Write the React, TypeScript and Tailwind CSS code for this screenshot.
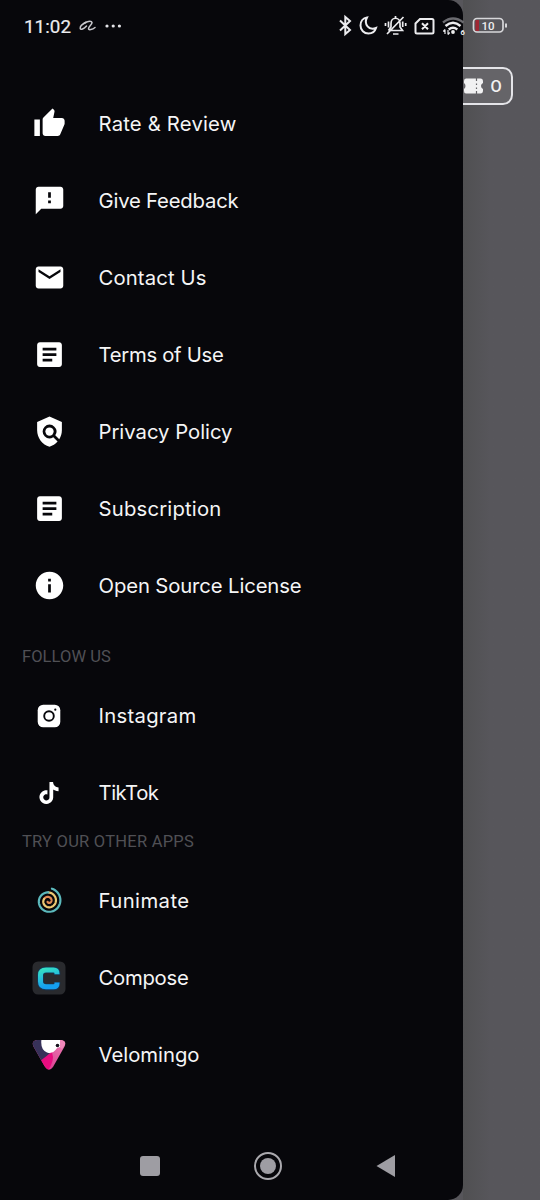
import { useState, useRef, useLayoutEffect } from "react";
import type { ReactNode } from "react";

function M({ d, s = 33 }: { d: string; s?: number }) {
  return (
    <svg width={s} height={s} viewBox="0 0 24 24" fill="#fff" fillRule="evenodd">
      <path d={d} />
    </svg>
  );
}

const thumb = "M1 21h4V9H1v12zm22-11c0-1.100-.9-2-2-2h-6.310l.95-4.570.03-.32c0-.41-.17-.79-.44-1.060L14.170 1 7.590 7.590C7.220 7.950 7 8.450 7 9v10c0 1.100.9 2 2 2h9c.83 0 1.540-.5 1.840-1.220l3.020-7.050c.09-.23.14-.47.14-.73v-2z";
const feedback = "M20 2H4c-1.100 0-1.990.9-1.990 2L2 22l4-4h14c1.100 0 2-.9 2-2V4c0-1.100-.9-2-2-2zm-7 12h-2v-2h2v2zm0-4h-2V6h2v4z";
const mail = "M20 4H4c-1.100 0-2 .9-2 2v12c0 1.100.9 2 2 2h16c1.100 0 2-.9 2-2V6c0-1.100-.9-2-2-2zm0 4-8 5-8-5V6l8 5 8-5v2z";
const article = "M19 3H5c-1.100 0-2 .9-2 2v14c0 1.100.9 2 2 2h14c1.100 0 2-.9 2-2V5c0-1.100-.9-2-2-2zm-5 14H7v-2h7v2zm3-4H7v-2h10v2zm0-4H7V7h10v2z";
const info = "M12 2C6.480 2 2 6.480 2 12s4.480 10 10 10 10-4.480 10-10S17.520 2 12 2zm1 15h-2v-6h2v6zm0-8h-2V7h2v2z";
const tiktok = "M12.525.02c1.310-.02 2.610-.01 3.910-.02.080 1.530.630 3.090 1.750 4.170 1.120 1.110 2.700 1.620 4.240 1.790v4.030c-1.440-.05-2.890-.35-4.200-.97-.57-.26-1.100-.59-1.620-.93-.01 2.920.01 5.840-.02 8.750-.08 1.400-.54 2.790-1.350 3.940-1.310 1.920-3.580 3.170-5.910 3.210-1.430.08-2.860-.31-4.080-1.030-2.020-1.190-3.440-3.370-3.650-5.710-.02-.5-.03-1-.01-1.490.18-1.900 1.120-3.720 2.580-4.960 1.660-1.440 3.980-2.130 6.150-1.720.02 1.480-.04 2.960-.04 4.440-.99-.32-2.150-.23-3.020.37-.63.41-1.110 1.040-1.360 1.750-.21.51-.15 1.070-.14 1.610.24 1.640 1.820 3.020 3.500 2.870 1.120-.01 2.190-.66 2.770-1.610.19-.33.4-.67.410-1.060.1-1.790.06-3.570.07-5.360.01-4.030-.01-8.050.02-12.070z";

function Shield() {
  return (
    <svg width="33" height="33" viewBox="0 0 24 24">
      <path fill="#fff" d="M12 1 3 5v6c0 5.550 3.840 10.740 9 12 2.300-.56 4.330-1.900 5.880-3.710l-3.120-3.120a4.994 4.994 0 0 1-6.290-.64 5.003 5.003 0 0 1 0-7.070 5.003 5.003 0 0 1 7.070 0 5.006 5.006 0 0 1 .64 6.290l2.900 2.900C20.290 15.690 21 13.380 21 11V5l-9-4z" />
      <circle cx="12" cy="12" r="3" fill="#fff" />
    </svg>
  );
}

function Instagram() {
  return (
    <svg width="24" height="24" viewBox="0 0 24 24">
      <rect x=".7" y=".7" width="22.600" height="22.600" rx="5.500" fill="#fff" />
      <circle cx="12" cy="12" r="4.800" fill="none" stroke="#07070b" strokeWidth="1.900" />
      <circle cx="18.300" cy="5.700" r="1.100" fill="#07070b" />
    </svg>
  );
}

function Funimate() {
  const pts: string[] = [];
  const turns = 2.6;
  for (let i = 0; i <= 120; i++) {
    const t = i / 120;
    const r = 1.2 + t * 11.6;
    const a = -1.3 + (1 - t) * turns * Math.PI * 2;
    pts.push(`${(12.5 + r * Math.cos(a)).toFixed(2)} ${(14 + r * Math.sin(a)).toFixed(2)}`);
  }
  const seg = (a: number, b: number) => "M" + pts.slice(a, b + 1).join("L");
  return (
    <svg width="26" height="27" viewBox="0 0 26 27" fill="none" strokeWidth="2.200" strokeLinecap="round">
      <path d={seg(0, 38)} stroke="#e08a55" />
      <path d={seg(38, 76)} stroke="#ecc873" />
      <path d={seg(76, 120)} stroke="#5cb9bd" />
    </svg>
  );
}

function Compose() {
  return (
    <svg width="34" height="34" viewBox="0 0 34 34" fill="none">
      <defs>
        <linearGradient id="cg" x1="0" y1="0" x2="0.300" y2="1">
          <stop stopColor="#35dfc4" />
          <stop offset="1" stopColor="#159ff0" />
        </linearGradient>
      </defs>
      <rect x=".5" y=".5" width="33" height="33" rx="5.500" fill="#292a2e" />
      <path d="M25 14V12.500Q25 9 21.500 9H14Q8.500 9 8.500 14V20.500Q8.500 26 14 26H21.500Q25 26 25 22.500V21" stroke="#14375a" strokeWidth="6.500" />
      <path d="M25 13.300V12.500Q25 9 21.500 9H14Q8.500 9 8.500 14V20.500Q8.500 25.800 14 25.800H21.500Q25 25.800 25 22.500V21.500" stroke="url(#cg)" strokeWidth="5" />
    </svg>
  );
}

function Velomingo() {
  return (
    <svg width="34" height="32" viewBox="0 0 34 32">
      <defs>
        <clipPath id="vt">
          <path d="M5 1H29Q35 2 32.500 7.500L21 28Q17 33.500 13 28L1.500 7.500Q-1 2 5 1Z" />
        </clipPath>
        <linearGradient id="vp" x1="1" y1="0" x2="0" y2="1">
          <stop stopColor="#ed83b6" />
          <stop offset=".6" stopColor="#df4b99" />
          <stop offset="1" stopColor="#ed1682" />
        </linearGradient>
      </defs>
      <g clipPath="url(#vt)">
        <path d="M0 0H34V32H0Z" fill="url(#vp)" />
        <path d="M0 0H12L19 13L9 24L0 8Z" fill="#373159" />
        <path d="M8 22L20 13Q23 22 16 31Z" fill="#e80c80" />
        <path d="M9.500 0H29V8Q25 8 23.500 11Q20 15.500 15 13.500Q8 10.500 9.500 0Z" fill="#fff" />
        <path d="M28 0H34V4L30 10L28 8Z" fill="#f087ba" />
        <circle cx="25.500" cy="6.500" r="1.800" fill="#17131e" />
      </g>
    </svg>
  );
}

function FitText({ text, width, className }: { text: string; width: number; className: string }) {
  const ref = useRef<HTMLSpanElement>(null);
  const [spacing, setSpacing] = useState(0);
  useLayoutEffect(() => {
    const el = ref.current;
    if (el) setSpacing((width - el.getBoundingClientRect().width) / text.length);
  }, []);
  return (
    <span ref={ref} className={className} style={{ letterSpacing: spacing }}>
      {text}
    </span>
  );
}

function Row({ icon, label, width }: { icon: ReactNode; label: string; width: number }) {
  return (
    <div className="flex h-[77px] shrink-0 items-center">
      <div className="flex w-[98.500px] shrink-0 items-center justify-center">{icon}</div>
      <FitText text={label} width={width} className="whitespace-nowrap font-['Inter',sans-serif] text-[20.300px] leading-6 text-[#f5f5f6]" />
    </div>
  );
}

function Heading({ text, width }: { text: string; width: number }) {
  return (
    <div className="flex h-5 items-center pl-[22px] pt-px">
      <FitText text={text} width={width} className="whitespace-nowrap text-[16.500px] leading-5 text-[#505055]" />
    </div>
  );
}

function StatusBar() {
  return (
    <div className="absolute left-0 top-0 flex h-[52px] w-full items-center pl-6 text-[#ececef]">
      <FitText text="11:02" width={47} className="pt-px text-[18.800px] leading-6 [-webkit-text-stroke:0.2px_#ececef]" />
      <svg className="ml-2 shrink-0" width="18" height="12" viewBox="0 0 18 12" fill="none" stroke="#c8c8cc" strokeLinecap="round" strokeLinejoin="round">
        <path d="M4.500 3.500C7 1.500 12.500 .3 13 2.500C13.200 4.500 9.500 6.500 9.500 8.700C9.500 10.500 13.500 9.500 16 7.500" strokeWidth="1.500" />
        <path d="M7 2.500C3.500 4 1 6.500 1.200 8.500C1.500 10.300 5 8.800 7.500 6" strokeWidth="1.500" />
      </svg>
      <svg className="ml-2 shrink-0" width="17" height="4" viewBox="0 0 17 4" fill="#e4e4e8">
        <circle cx="2" cy="2" r="1.600" /><circle cx="8.200" cy="2" r="1.600" /><circle cx="14.400" cy="2" r="1.600" />
      </svg>
      <svg className="absolute left-[335px] top-[10px]" width="180" height="32" viewBox="335 10 180 32" fill="none" stroke="#ececef" strokeWidth="2">
        <path d="M340 20.500 350 30 345.300 34V17L350 21 340 30.500" />
        <path d="M367 17.500C363 18 360.500 21.500 360.500 25.500C360.500 30 364 33.500 368.500 33.500C372 33.500 375 31.300 376 28C369 31 363.500 24 367 17.500Z" />
        <path d="M388.500 30.500H402.500L400 27V23.500C400 16.500 391 16.500 391 23.500V27L388.500 30.500M387 34 403.500 17M393 34H398.500M395.500 16V19M388.500 21.500V27.500M385.500 23V26M402.700 21.500V27M405.700 23V26" strokeWidth="1.700" />
        <path d="M420 19H432Q433.500 19 433.500 20.500V32Q433.500 33.500 432 33.500H417Q415.500 33.500 415.500 32V23.500Z M422 23.300 428 29.300M428 23.300 422 29.300" />
        <path d="M443 22.500Q453 14.500 463.500 22.500" stroke="#6b6b70" strokeWidth="2.300" />
        <path d="M445.500 26Q453 19.500 460.500 26M448.700 29.500Q453 26 457.300 29.500" strokeWidth="2.400" />
        <circle cx="453" cy="32" r="1.900" fill="#eee" stroke="none" />
        <path d="M445 29.500V34M443.300 31.500 445 29.500M448 30V34.500M448 34.500 449.700 32.500" strokeWidth="1.200" />
        <rect x="473.500" y="18.500" width="29.500" height="13.500" rx="3.500" stroke="#d7d7da" strokeWidth="1.700" />
        <path d="M475.500 20H479V31H475.500Z" fill="#a02733" stroke="none" />
        <path d="M506 23.500V27.500" strokeWidth="1.700" />
        <text x="460.500" y="34.500" fontSize="7.500" fontWeight="700" fill="#eee" stroke="none">6</text>
        <text x="481.500" y="30" fontSize="11.500" fontWeight="500" fill="#eee" stroke="none">10</text>
      </svg>
    </div>
  );
}

export default function App() {
  return (
    <div className="relative flex h-[1200px] w-[540px] overflow-hidden bg-[#57565b] font-['Roboto',sans-serif]">
      <main className="z-10 flex h-full w-[463px] shrink-0 flex-col rounded-r-[15px] bg-[#07070b] pt-[85px]">
        <Row icon={<M d={thumb} />} label="Rate & Review" width={138} />
        <Row icon={<M d={feedback} />} label="Give Feedback" width={140} />
        <Row icon={<M d={mail} />} label="Contact Us" width={108} />
        <Row icon={<M d={article} />} label="Terms of Use" width={125} />
        <Row icon={<Shield />} label="Privacy Policy" width={134} />
        <Row icon={<M d={article} />} label="Subscription" width={123} />
        <Row icon={<M d={info} />} label="Open Source License" width={203} />
        <div className="pt-[22px]"><Heading text="FOLLOW US" width={89} /></div>
        <div className="pt-[11px]">
          <Row icon={<Instagram />} label="Instagram" width={98} />
          <Row icon={<M d={tiktok} s={22} />} label="TikTok" width={60} />
        </div>
        <Heading text="TRY OUR OTHER APPS" width={172} />
        <div className="pt-[11px]">
          <Row icon={<Funimate />} label="Funimate" width={91} />
          <Row icon={<Compose />} label="Compose" width={90} />
          <Row icon={<Velomingo />} label="Velomingo" width={101} />
        </div>
        <nav className="mt-auto flex h-[68px] items-center pl-[140px]">
          <span className="h-5 w-5 rounded-[3px] bg-[#9e9da3]" />
          <span className="ml-[94px] flex h-7 w-7 items-center justify-center rounded-full border-2 border-[#aaa9ae]">
            <span className="h-4 w-4 rounded-full bg-[#9e9da3]" />
          </span>
          <svg className="ml-[93px]" width="21" height="24" viewBox="0 0 21 24"><path d="M20 1V23L1.500 12Z" fill="#9e9da3" /></svg>
        </nav>
      </main>
      <aside className="min-w-0 flex-1 bg-gradient-to-r from-[#505052] to-[#57565b] to-35% pt-[67px]">
        <div className="-ml-3 flex h-[38px] w-[62px] items-center rounded-[10px] border-2 border-[#e4e4e8] bg-[#656468] pl-[11px] text-[#f1f1f2]">
          <svg width="20" height="18" viewBox="0 0 20 18" fill="#f1f1f2">
            <path d="M0 4Q0 1.500 2 1.500H16.500Q19 1.500 19 4.500V6Q17 7 17 9T19 12V13.500Q19 16.500 16.500 16.500H2Q0 16.500 0 14V12Q1.500 11 1.500 9T0 6Z" />
            <path d="M12.500 1V4M12.500 14V17M12.500 6.500V8M12.500 10.500V12" stroke="#656468" strokeWidth="1.200" />
          </svg>
          <span className="ml-[6px] inline-block w-[12px] scale-x-110 text-center font-['Inter',sans-serif] text-[16.500px] font-medium">0</span>
        </div>
      </aside>
      <div className="absolute inset-0 z-20"><StatusBar /></div>
    </div>
  );
}
